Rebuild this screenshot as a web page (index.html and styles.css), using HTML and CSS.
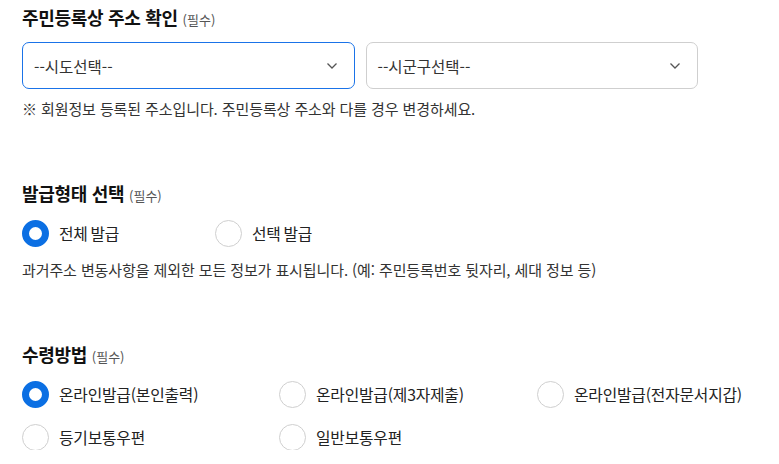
FILE: index.html
```html
<!DOCTYPE html>
<html lang="ko">
<head>
<meta charset="utf-8">
<link rel="stylesheet" href="styles.css">
</head>
<body>
<div class="page">
  <section class="sec sec-addr">
    <h2 class="title">주민등록상 주소 확인 <span class="req">(필수)</span></h2>
    <div class="selects">
      <div class="select active"><span>--시도선택--</span><svg class="chev" width="12" height="8" viewBox="0 0 12 8"><path d="M1.5 1.5 L6 6 L10.5 1.5" fill="none" stroke="#555" stroke-width="1.3"/></svg></div>
      <div class="select"><span>--시군구선택--</span><svg class="chev" width="12" height="8" viewBox="0 0 12 8"><path d="M1.5 1.5 L6 6 L10.5 1.5" fill="none" stroke="#555" stroke-width="1.3"/></svg></div>
    </div>
    <p class="note">※ 회원정보 등록된 주소입니다. 주민등록상 주소와 다를 경우 변경하세요.</p>
  </section>

  <section class="sec sec-type">
    <h2 class="title">발급형태 선택 <span class="req">(필수)</span></h2>
    <div class="radios two">
      <label class="radio"><span class="dot on"></span>전체 발급</label>
      <label class="radio"><span class="dot"></span>선택 발급</label>
    </div>
    <p class="note">과거주소 변동사항을 제외한 모든 정보가 표시됩니다. (예: 주민등록번호 뒷자리, 세대 정보 등)</p>
  </section>

  <section class="sec sec-recv">
    <h2 class="title">수령방법 <span class="req">(필수)</span></h2>
    <div class="radios three">
      <label class="radio"><span class="dot on"></span>온라인발급(본인출력)</label>
      <label class="radio"><span class="dot"></span>온라인발급(제3자제출)</label>
      <label class="radio"><span class="dot"></span>온라인발급(전자문서지갑)</label>
      <label class="radio"><span class="dot"></span>등기보통우편</label>
      <label class="radio"><span class="dot"></span>일반보통우편</label>
    </div>
  </section>
</div>
</body>
</html>
```
FILE: styles.css
```css
* { box-sizing: border-box; }
html, body { margin: 0; padding: 0; background: #fff; }
body {
  font-family: "Noto Sans CJK KR", "Noto Sans", sans-serif;
  color: #222;
}
.page { padding: 4px 22px 0 22px; width: 779px; }
.title {
  margin: 0;
  font-size: 18px;
  font-weight: 700;
  line-height: 26px;
  height: 26px;
  color: #111;
  letter-spacing: -0.3px;
}
.req { font-size: 13px; font-weight: 400; color: #555; letter-spacing: 0; line-height: 1; }
.selects { display: flex; gap: 11px; margin-top: 12px; width: 676px; }
.select {
  flex: 1;
  height: 47px;
  border: 1px solid #cfcfcf;
  border-radius: 7px;
  display: flex;
  align-items: center;
  justify-content: space-between;
  padding: 0 16px 0 11px;
  font-size: 15.5px;
  color: #333;
}
.select.active { border-color: #1a73e8; }
.chev { display: block; }
.note {
  margin: 0;
  font-size: 15px;
  color: #333;
  line-height: 20px;
  height: 20px;
  letter-spacing: -0.1px;
}
.sec-addr .note { margin-top: 10px; }
.sec-type { margin-top: 61px; }
.sec-type .radios { margin-top: 14px; }
.sec-type .note { margin-top: 14px; }
.sec-recv { margin-top: 61px; }
.sec-recv .radios { margin-top: 14px; }
.radios { display: grid; row-gap: 17px; }
.radios.two { grid-template-columns: 193px 200px; }
.radios.three { grid-template-columns: 257px 258px 240px; }
.radio {
  display: flex;
  align-items: center;
  gap: 10px;
  font-size: 15.8px;
  color: #222;
  height: 26px;
  letter-spacing: -0.2px;
  word-spacing: -1.5px;
}
.dot {
  width: 27px;
  height: 27px;
  border-radius: 50%;
  border: 1px solid #cfcfcf;
  flex: none;
}
.dot.on { border: 7px solid #0b6fe3; }
```
